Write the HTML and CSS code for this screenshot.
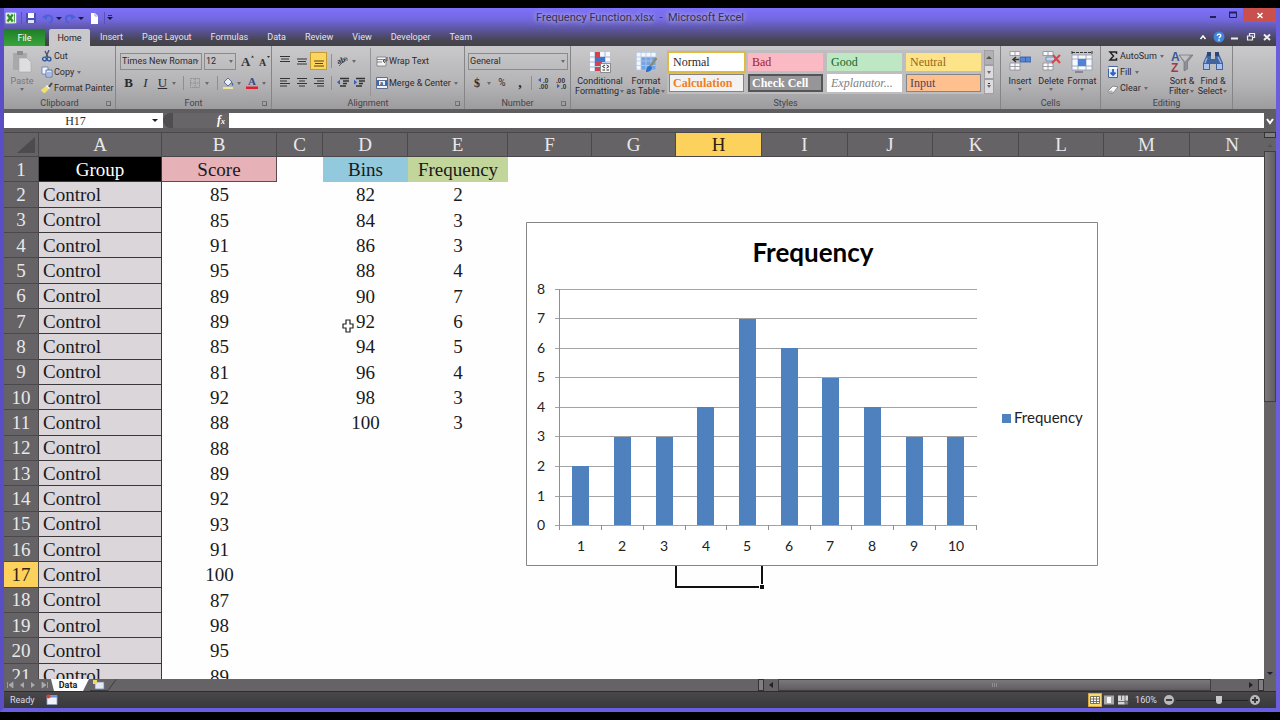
FILE: index.html
```html
<!DOCTYPE html>
<html lang="en">
<head>
<meta charset="utf-8">
<title>Frequency Function.xlsx - Microsoft Excel</title>
<link rel="stylesheet" href="styles.css">
</head>
<body>
<div class="window">
  <header class="chrome">
    <div class="titlebar">
      <div class="quick">
        <svg class="i16" viewBox="0 0 16 16"><path d="M2 2h12v12H2z" fill="#f4fbf2"/><path d="M2 2h9v12H2z" fill="#d9efd2"/><path d="M4 4l6 8M10 4l-6 8" stroke="#2c8a2c" stroke-width="2.4"/><path d="M12 3v10" stroke="#3f9a3f"/></svg>
        <span class="qsep first"></span>
        <button class="q w17" aria-label="Save"><svg class="i12" viewBox="0 0 12 12"><path d="M1 1h10v10H1z" fill="#4a50b4"/><path d="M3 1h6v5H3z" fill="#fff"/><path d="M3 8h6v3H3z" fill="#dfe3f5"/></svg></button>
        <button class="q w17" aria-label="Undo"><svg class="i12" viewBox="0 0 12 12"><path d="M3 6c2-4 7-3 7 1s-2 3-3 4" fill="none" stroke="#4a62d8" stroke-width="2"/><path d="M0 5l5-3v6z" fill="#4a62d8"/></svg></button>
        <span class="caret dark w6"></span>
        <button class="q w16" aria-label="Redo"><svg class="i12" viewBox="0 0 12 12"><path d="M9 6C7 2 2 3 2 7s2 3 3 4" fill="none" stroke="#4a62d8" stroke-width="2"/><path d="M12 5L7 2v6z" fill="#4a62d8"/></svg></button>
        <span class="caret dark w6"></span>
        <button class="q w20" aria-label="New"><svg class="i12" viewBox="0 0 12 12"><path d="M3 1h4l3 3v8H3z" fill="#fff"/><path d="M7 1v3h3" fill="none" stroke="#9aa" /></svg></button>
        <span class="qsep"></span>
        <span class="caret dark bar w10"></span>
      </div>
      <h1 class="title">Frequency Function.xlsx&nbsp; - &nbsp;Microsoft Excel</h1>
      <div class="winbtns">
        <button class="wb" aria-label="Minimize"><svg class="i12" viewBox="0 0 12 12"><path d="M3 8h6" stroke="#222058" stroke-width="2"/></svg></button>
        <button class="wb" aria-label="Maximize"><svg class="i12" viewBox="0 0 12 12"><path d="M2.500 3.500h7v5h-7z" fill="none" stroke="#222058"/><path d="M2 3.500h8" stroke="#222058" stroke-width="2"/></svg></button>
        <button class="wb close" aria-label="Close"><svg class="i12" viewBox="0 0 12 12"><path d="M3.500 4l5 5M8.500 4l-5 5" stroke="#fff" stroke-width="1.500"/></svg></button>
      </div>
    </div>
    <nav class="tabs">
      <button class="file">File</button>
      <button class="tab on">Home</button>
      <button class="tab">Insert</button>
      <button class="tab">Page Layout</button>
      <button class="tab">Formulas</button>
      <button class="tab">Data</button>
      <button class="tab">Review</button>
      <button class="tab">View</button>
      <button class="tab">Developer</button>
      <button class="tab">Team</button>
      <div class="docbtns">
        <svg class="i12" viewBox="0 0 12 12"><path d="M3.500 8L6 5l2.500 3" fill="none" stroke="#fff" stroke-width="1.500"/></svg>
        <svg class="i12" viewBox="0 0 12 12"><circle cx="6" cy="6" r="5.500" fill="#3f86dc"/><path d="M4.300 4.800c0-2.300 3.500-2.200 3.500-.2 0 1.300-1.700 1.300-1.700 2.700M6 8.300v1.400" fill="none" stroke="#fff" stroke-width="1.400"/></svg>
        <svg class="i12" viewBox="0 0 12 12"><path d="M2 7.500h7" stroke="#eee" stroke-width="2"/></svg>
        <svg class="i12" viewBox="0 0 12 12"><path d="M4.500 4.500v-2h5v4h-2M2.500 5h5v4h-5z" fill="none" stroke="#eee" stroke-width="1.200"/></svg>
        <svg class="i12" viewBox="0 0 12 12"><path d="M3 3.500l6 5.500M9 3.500L3 9" stroke="#eee" stroke-width="2"/></svg>
      </div>
    </nav>
  </header>

  <section class="ribbon">
    <div class="group g-clip">
      <div class="body">
        <button class="big dim w36"><svg class="bi" viewBox="0 0 22 24"><path d="M2 3h14v17H2z" fill="#a9a8ab"/><path d="M6 1h6v4H6z" fill="#8e8d91"/><path d="M8 8h8l4 4v10H8z" fill="#dedde0" stroke="#a5a4a8" stroke-width=".6"/></svg><span>Paste</span><i class="caret"></i></button>
        <div class="list">
          <button class="row"><svg class="i12" viewBox="0 0 12 12"><path d="M8 0L5 7M4 1l3 6" stroke="#44536e" stroke-width="1.300"/><circle cx="3.500" cy="9" r="1.900" fill="none" stroke="#2d57a8" stroke-width="1.400"/><circle cx="8" cy="9" r="1.900" fill="none" stroke="#2d57a8" stroke-width="1.400"/></svg>Cut</button>
          <button class="row"><svg class="i12" viewBox="0 0 12 12"><path d="M1 1h6v7H1z" fill="#f4f6fb" stroke="#5b78b8" stroke-width=".8"/><path d="M5 4h6v7H5z" fill="#dfe8f8" stroke="#3f62aa" stroke-width=".8"/><path d="M6 7h4M6 9h4" stroke="#3f62aa" stroke-width=".7"/></svg>Copy<i class="caret"></i></button>
          <button class="row"><svg class="i12" viewBox="0 0 12 12"><path d="M0 8l5-4 3 3-4 4c-2 0-3-1-4-3z" fill="#f2df6b"/><path d="M5 4l3 3 1-1-3-3z" fill="#fff"/><path d="M8 5l3-4" stroke="#44484f" stroke-width="2"/></svg>Format Painter</button>
        </div>
      </div>
      <div class="glabel">Clipboard</div><i class="launch"></i>
    </div>

    <div class="group g-font">
      <div class="body two">
        <div class="line gap2">
          <label class="sel w82"><select aria-label="Font"><option>Times New Roman</option></select><i class="caret"></i></label>
          <label class="sel w32"><select aria-label="Font size"><option>12</option></select><i class="caret"></i></label>
          <button class="ib w17 serif" aria-label="Grow font"><svg class="i14" viewBox="0 0 14 14"><path d="M11 3.500l1.500-2L14 3.500z" fill="#333"/><text x="1" y="12" font-size="13" class="sv">A</text></svg></button>
          <button class="ib w14 serif" aria-label="Shrink font"><svg class="i14" viewBox="0 0 14 14"><path d="M10 2h3l-1.500 2z" fill="#333"/><text x="2" y="12" font-size="10" class="sv">A</text></svg></button>
        </div>
        <div class="line">
          <button class="ib w17 serif b">B</button><button class="ib w17 serif it">I</button><button class="ib w17 serif un">U</button><i class="caret w6"></i><i class="sep w12"></i>
          <button class="ib w12" aria-label="Borders"><svg class="i12" viewBox="0 0 12 12"><path d="M1.500 1.500h9v9h-9zM6 1.500v9M1.500 6h9" fill="none" stroke="#8f8e93" stroke-dasharray="1.500 .7"/></svg></button><i class="caret w12"></i><i class="sep w8"></i>
          <button class="ib w14" aria-label="Fill colour"><svg class="i12" viewBox="0 0 12 12"><path d="M2 5l4-4 4 4-4 4z" fill="#e9eef7" stroke="#51648f" stroke-width=".9"/><path d="M9.500 5c2 1 2 3 1.300 4-1-1-1.300-2-1.300-4z" fill="#2f64c0"/><path d="M1 10h10v2H1z" fill="#e8e6a0"/></svg></button><i class="caret w8"></i>
          <button class="ib w18" aria-label="Font colour"><svg class="i12" viewBox="0 0 12 12"><text x="2" y="8" font-size="11" class="sv blue">A</text><path d="M0 9.500h12V12H0z" fill="#e3202a"/></svg></button><i class="caret w6"></i>
        </div>
      </div>
      <div class="glabel">Font</div><i class="launch"></i>
    </div>

    <div class="group g-align">
      <div class="body">
        <div class="two alignl">
          <div class="line">
            <button class="ib w17" aria-label="Top align"><svg class="i12" viewBox="0 0 12 12"><path d="M1 1.500h10M2 4h8M1 6.500h10" stroke="#333"/></svg></button>
            <button class="ib w17" aria-label="Middle align"><svg class="i12" viewBox="0 0 12 12"><path d="M1 4h10M2 6.500h8M1 9h10" stroke="#333"/></svg></button>
            <button class="ib w17 lit" aria-label="Bottom align"><svg class="i12" viewBox="0 0 12 12"><path d="M1 6h10M2 8.500h8M1 11h10" stroke="#5a4310"/></svg></button>
            <i class="sep w8"></i>
            <button class="ib w16" aria-label="Orientation"><svg class="i12" viewBox="0 0 12 12"><path d="M2 11l8-8M10 3v3M10 3H7" stroke="#666" fill="none"/><text x="0" y="8" font-size="8" transform="rotate(-20 4 6)" class="sv">ab</text></svg></button><i class="caret w6"></i>
          </div>
          <div class="line">
            <button class="ib w17" aria-label="Align left"><svg class="i12" viewBox="0 0 12 12"><path d="M1 1.500h10M1 4h7M1 6.500h10M1 9h7" stroke="#333" stroke-width="1.200"/></svg></button>
            <button class="ib w17" aria-label="Centre"><svg class="i12" viewBox="0 0 12 12"><path d="M1 1.500h10M3 4h6M1 6.500h10M3 9h6" stroke="#333" stroke-width="1.200"/></svg></button>
            <button class="ib w17" aria-label="Align right"><svg class="i12" viewBox="0 0 12 12"><path d="M1 1.500h10M4 4h7M1 6.500h10M4 9h7" stroke="#333" stroke-width="1.200"/></svg></button>
            <i class="sep w8"></i>
            <button class="ib w16" aria-label="Decrease indent"><svg class="i12" viewBox="0 0 12 12"><path d="M3 1.500h9M6 4h6M6 6.500h4M3 9h6" stroke="#333" stroke-width="1.500"/><path d="M0 5.200l3-2.500v5z" fill="#3d5bb5"/></svg></button>
            <button class="ib w16" aria-label="Increase indent"><svg class="i12" viewBox="0 0 12 12"><path d="M3 1.500h9M6 4h6M6 6.500h4M3 9h6" stroke="#333" stroke-width="1.500"/><path d="M4 5.200L1 2.700v5z" fill="#3d5bb5"/></svg></button>
          </div>
        </div>
        <div class="two alignr">
          <button class="row"><svg class="i12" viewBox="0 0 12 12"><path d="M1 2h9v9H1z" fill="#f3f3f5" stroke="#77767b" stroke-width=".8"/><path d="M1 4.500h9M1 7h5" stroke="#77767b" stroke-width=".9"/><path d="M11 2v4H7M9 4L7 6l2 2" fill="none" stroke="#555"/></svg>Wrap Text</button>
          <button class="row"><svg class="i12" viewBox="0 0 12 12"><path d="M.5.5h11v11H.5z" fill="#eef2fb" stroke="#5c6d93"/><path d="M0 3.500h12M0 8.500h12" stroke="#5c6d93" /><path d="M1 4h2v4H1zM9 4h2v4H9z" fill="#3c66bd"/><text x="4" y="8.200" font-size="6" class="sv">a</text></svg>Merge &amp; Center<i class="caret"></i></button>
        </div>
      </div>
      <div class="glabel">Alignment</div><i class="launch"></i>
    </div>

    <div class="group g-num">
      <div class="body two">
        <div class="line"><label class="sel w100"><select aria-label="Number format"><option>General</option></select><i class="caret"></i></label></div>
        <div class="line">
          <button class="ib w18 serif b s12">$</button><i class="caret w6"></i><button class="ib w20 s10">%</button><button class="ib w16 serif b s14">,</button><i class="sep w6"></i>
          <button class="ib w20" aria-label="Increase decimal"><svg class="i12" viewBox="0 0 12 12"><text x="5" y="5.500" font-size="6.500" class="ss">.0</text><text x="1" y="11.500" font-size="6.500" class="ss">.00</text><path d="M0 3l3-2.200v4.400z" fill="#3d5bb5"/></svg></button>
          <button class="ib w14" aria-label="Decrease decimal"><svg class="i12" viewBox="0 0 12 12"><text x="1" y="5.500" font-size="6.500" class="ss">.00</text><text x="6" y="11.500" font-size="6.500" class="ss">.0</text><path d="M5 9L2 6.800v4.400z" fill="#3d5bb5"/></svg></button>
        </div>
      </div>
      <div class="glabel">Number</div><i class="launch"></i>
    </div>

    <div class="group g-styles">
      <div class="body">
        <button class="big w50"><svg class="bi" viewBox="0 0 22 24"><path d="M1 2h20v19H1z" fill="#f6f8fc"/><path d="M1 7h20M1 12h20M1 17h20M6 2v19M16 2v19" stroke="#9fb3d6"/><path d="M6 2h5v5H6zM6 12h7v4H6zM6 17h5v4H6z" fill="#d6404a"/><path d="M6 7h10v5H6z" fill="#4076c9"/><path d="M11.500 13.500h10v9h-10z" fill="#f7f7fa" stroke="#777" stroke-width=".8"/><path d="M16 15l-2.500 1.500L16 18M13.500 20H16M17.500 15l2.500 1.500-2.500 1.500M17.500 20H20" stroke="#333" fill="none"/></svg><span>Conditional<br>Formatting<i class="caret w6"></i></span></button>
        <button class="big w42"><svg class="bi" viewBox="0 0 22 24"><path d="M1 2h20v18H1z" fill="#f4f7fd"/><path d="M6 7h15v13H6z" fill="#74a3e6"/><path d="M1 2.500h20M1 7h20M1 11h20M1 15.500h20M1 20h20M1.500 2v18M6 2v18M11 2v18M16 2v18M21 2v18" stroke="#b7c6e0" stroke-width=".8"/><path d="M21.500 8l-6 8" stroke="#8c8b70" stroke-width="2.400"/><path d="M11 22c0-4 2-6 4-6.500l2 2c0 3-3 4.500-6 4.500z" fill="#2f6fc6"/></svg><span>Format<br>as Table<i class="caret w6"></i></span></button>
        <div class="gallery">
          <div class="cells">
            <button class="st normal">Normal</button><button class="st bad">Bad</button><button class="st good">Good</button><button class="st neutral">Neutral</button>
            <button class="st calc">Calculation</button><button class="st check">Check Cell</button><button class="st expl">Explanator...</button><button class="st input">Input</button>
          </div>
          <div class="gscroll"><button aria-label="Up" class="dimb"><i class="caret up"></i></button><button aria-label="Down"><i class="caret"></i></button><button aria-label="More"><i class="caret bar"></i></button></div>
        </div>
      </div>
      <div class="glabel">Styles</div>
    </div>

    <div class="group g-cells">
      <div class="body">
        <button class="big w30"><svg class="bi" viewBox="0 0 22 24"><path d="M1 1.500h10v4H1zM1 13h10v7H1z" fill="#f7f8fb" stroke="#8a8c94" stroke-width=".8"/><path d="M6 1.500v4M6 13v7M1 16.500h10" stroke="#8a8c94" stroke-width=".8"/><path d="M11 7h11v5H11z" fill="#5585d6" stroke="#34599d" stroke-width=".8"/><path d="M16.500 7v5" stroke="#34599d" stroke-width=".8"/><path d="M4 9.500h6M7 7L4 9.500 7 12" stroke="#333" stroke-width="1.400" fill="none"/></svg><span>Insert</span><i class="caret"></i></button>
        <button class="big w32"><svg class="bi" viewBox="0 0 22 24"><path d="M3 1.500h10v4H3zM3 13h10v7H3z" fill="#f7f8fb" stroke="#8a8c94" stroke-width=".8"/><path d="M8 1.500v4M8 13v7M3 16.500h10" stroke="#8a8c94" stroke-width=".8"/><path d="M6 7h9v4H6z" fill="#c3d2ee" stroke="#6b80ab" stroke-width=".8"/><path d="M13 5l7 8M20 5l-8 8" stroke="#dc4343" stroke-width="2"/></svg><span>Delete</span><i class="caret"></i></button>
        <button class="big w30"><svg class="bi" viewBox="0 0 22 24"><path d="M1 5h20v15H1z" fill="#f7f9fd" stroke="#8d99b3" stroke-width=".8"/><path d="M1 9h20M1 16h20M7 5v15M15 5v15" stroke="#8d99b3" stroke-width=".8"/><path d="M7 9h8v7H7z" fill="#4d82d8"/><path d="M1 1v3M21 1v3M1 2.500h20" stroke="#333" stroke-dasharray="3 1"/><path d="M4 22h8" stroke="#555"/></svg><span>Format</span><i class="caret"></i></button>
      </div>
      <div class="glabel">Cells</div>
    </div>

    <div class="group g-edit">
      <div class="body">
        <div class="list">
          <button class="row"><svg class="i12" viewBox="0 0 12 12"><path d="M9.500 4V2H3l3.500 4L3 10h6.500V8" fill="none" stroke="#222" stroke-width="1.500"/></svg>AutoSum<i class="caret"></i></button>
          <button class="row"><svg class="i12" viewBox="0 0 12 12"><path d="M1.500.5h9v11h-9z" fill="#dfe9fb" stroke="#49639b"/><path d="M1.500 1h9v2h-9z" fill="#fff"/><path d="M6 3v6M3.500 6.500L6 9l2.500-2.500" fill="none" stroke="#2d62c4" stroke-width="1.800"/></svg>Fill<i class="caret"></i></button>
          <button class="row"><svg class="i12" viewBox="0 0 12 12"><path d="M1 9l5-5 5 1-5 6H2z" fill="#f6f6f9" stroke="#77767d" stroke-width=".8"/><path d="M1 9l4-.5L6 11H2z" fill="#aeb0ba"/></svg>Clear<i class="caret"></i></button>
        </div>
        <button class="big w32"><svg class="bi" viewBox="0 0 22 24"><text x="0" y="11" font-size="12" class="sa">A</text><text x="0" y="22" font-size="12" class="sz">Z</text><path d="M8 5h14l-5.500 7v7l-3.500 2v-9z" fill="#8f9095" stroke="#6c6d72" stroke-width=".6"/><path d="M9 5.500h10l-5 6z" fill="#c3c4c8"/></svg><span>Sort &amp;<br>Filter<i class="caret w6"></i></span></button>
        <button class="big w30"><svg class="bi" viewBox="0 0 22 24"><path d="M5 4h4v5h4V4h4l4 9v7h-7v-6H8v6H1v-7z" fill="#41639f"/><path d="M5 2h4v4H5zM13 2h4v4h-4z" fill="#2d4678"/><path d="M2 14h5v5H2zM15 14h5v5h-5z" fill="#a9c3ec"/><path d="M5 8l-2 5M16 7l3 6" stroke="#8fb0e4" stroke-width="1.500"/></svg><span>Find &amp;<br>Select<i class="caret w6"></i></span></button>
      </div>
      <div class="glabel">Editing</div>
    </div>
  </section>

  <section class="fbar">
    <label class="namebox"><input aria-label="Name box" value="H17"><i class="caret black"></i></label>
    <div class="fx"><i class="knob"></i><em>f<small>x</small></em></div>
    <input class="formula" aria-label="Formula bar">
    <button class="expand" aria-label="Expand formula bar"><svg class="i12" viewBox="0 0 12 12"><path d="M3 4l3 4 3-4" fill="none" stroke="#fff" stroke-width="2"/></svg></button>
  </section>

  <main class="main">
    <div class="sheet">
      <table class="grid">
        <colgroup><col class="c0"><col class="cA"><col class="cB"><col class="cC"><col class="cD"><col class="cE"><col class="cF"><col class="cF"><col class="cX"><col class="cX"><col class="cY"><col class="cX"><col class="cY"><col class="cX"><col class="cY"></colgroup>
        <thead><tr><th class="corner"><svg class="tri" viewBox="0 0 18 16"><path d="M18 0v16H0z" fill="#4d4b4e"/></svg></th><th>A</th><th>B</th><th>C</th><th>D</th><th>E</th><th>F</th><th>G</th><th class="hot">H</th><th>I</th><th>J</th><th>K</th><th>L</th><th>M</th><th>N</th></tr></thead>
        <tbody>
          <tr class="heads"><th>1</th><td>Group</td><td>Score</td><td></td><td>Bins</td><td>Frequency</td></tr>
          <tr><th>2</th><td>Control</td><td>85</td><td></td><td>82</td><td>2</td></tr>
          <tr><th>3</th><td>Control</td><td>85</td><td></td><td>84</td><td>3</td></tr>
          <tr><th>4</th><td>Control</td><td>91</td><td></td><td>86</td><td>3</td></tr>
          <tr><th>5</th><td>Control</td><td>95</td><td></td><td>88</td><td>4</td></tr>
          <tr><th>6</th><td>Control</td><td>89</td><td></td><td>90</td><td>7</td></tr>
          <tr><th>7</th><td>Control</td><td>89</td><td></td><td>92</td><td>6</td></tr>
          <tr><th>8</th><td>Control</td><td>85</td><td></td><td>94</td><td>5</td></tr>
          <tr><th>9</th><td>Control</td><td>81</td><td></td><td>96</td><td>4</td></tr>
          <tr><th>10</th><td>Control</td><td>92</td><td></td><td>98</td><td>3</td></tr>
          <tr><th>11</th><td>Control</td><td>88</td><td></td><td>100</td><td>3</td></tr>
          <tr><th>12</th><td>Control</td><td>88</td></tr>
          <tr><th>13</th><td>Control</td><td>89</td></tr>
          <tr><th>14</th><td>Control</td><td>92</td></tr>
          <tr><th>15</th><td>Control</td><td>93</td></tr>
          <tr><th>16</th><td>Control</td><td>91</td></tr>
          <tr><th class="hot">17</th><td>Control</td><td>100</td></tr>
          <tr><th>18</th><td>Control</td><td>87</td></tr>
          <tr><th>19</th><td>Control</td><td>98</td></tr>
          <tr><th>20</th><td>Control</td><td>95</td></tr>
          <tr><th>21</th><td>Control</td><td>89</td></tr>
        </tbody>
      </table>
      <div class="selection"><i class="handle"></i></div>
      <svg class="chart" viewBox="526 222 572 344" role="img" aria-label="Frequency chart">
        <path d="M526.500 222.500h571v343h-571z" fill="#fff" stroke="#858487"/>
        <text x="813" y="262" class="ctitle">Frequency</text>
        <path d="M555 289.500h422M555 318.500h422M555 348.500h422M555 377.500h422M555 407.500h422M555 436.500h422M555 466.500h422M555 496.500h422M555 525.500h422" stroke="#a3a2a5" fill="none"/>
        <g fill="#4e81bd"><path d="M572 466h17v59h-17zM614 437h17v88h-17zM656 437h17v88h-17zM697 407h17v118h-17zM739 319h17v206h-17zM781 348h17v177h-17zM822 378h17v147h-17zM864 407h17v118h-17zM906 437h17v88h-17zM947 437h17v88h-17zM1002 414h9v9h-9z"/></g>
        <path d="M559.500 289v241M601.500 525v5M643.500 525v5M685.500 525v5M726.500 525v5M768.500 525v5M810.500 525v5M851.500 525v5M893.500 525v5M935.500 525v5M976.500 525v5" stroke="#8f8e91" fill="none"/>
        <g class="clab"><text x="541" y="294">8</text><text x="541" y="323">7</text><text x="541" y="353">6</text><text x="541" y="382">5</text><text x="541" y="412">4</text><text x="541" y="441">3</text><text x="541" y="471">2</text><text x="541" y="501">1</text><text x="541" y="530">0</text>
        <text x="581" y="551">1</text><text x="622" y="551">2</text><text x="664" y="551">3</text><text x="706" y="551">4</text><text x="747" y="551">5</text><text x="789" y="551">6</text><text x="830" y="551">7</text><text x="872" y="551">8</text><text x="914" y="551">9</text><text x="956" y="551">10</text></g>
        <text x="1014" y="423" class="cleg">Frequency</text>
      </svg>
      <svg class="cursor" viewBox="0 0 12 14"><path d="M4 1h4v4h3v4H8v4H4V9H1V5h3z" fill="#fff" stroke="#222" stroke-width="1.200"/></svg>
    </div>
    <div class="vscroll">
      <i class="vsplit"></i><i class="caret up black vh"></i><i class="vthumb"></i><i class="caret black vh"></i>
    </div>
  </main>

  <footer>
    <div class="sheetbar">
      <div class="nav">
        <svg class="i8" viewBox="0 0 8 8"><path d="M1.500 1v6M7 1v6L3 4z" stroke="#aaa9ac" fill="#aaa9ac" stroke-width=".8"/></svg>
        <svg class="i8" viewBox="0 0 8 8"><path d="M6 1v6L2 4z" fill="#aaa9ac"/></svg>
        <svg class="i8" viewBox="0 0 8 8"><path d="M2 1v6l4-3z" fill="#aaa9ac"/></svg>
        <svg class="i8" viewBox="0 0 8 8"><path d="M6.500 1v6M1 1v6l4-3z" stroke="#aaa9ac" fill="#aaa9ac" stroke-width=".8"/></svg>
      </div>
      <button class="stab">Data</button>
      <svg class="newtab" viewBox="0 0 34 12"><path d="M1 11.500h18L27 .5" fill="none" stroke="#3e3d40"/><path d="M6 3h9v7H6z" fill="#e4e8f5" stroke="#6d7ca5" stroke-width=".7"/><path d="M4 1h4v4H4z" fill="#f0d76a"/></svg>
      <span class="grow"></span>
      <i class="hsplit"></i><i class="hbtn"><svg class="i8" viewBox="0 0 8 8"><path d="M6 1v6L2 4z" fill="#222"/></svg></i>
      <div class="htrack"><i class="hthumb"><svg class="i8" viewBox="0 0 8 8"><path d="M1.500 2v4M3.500 2v4M5.500 2v4" stroke="#8e8c90"/></svg></i></div>
      <i class="hbtn"><svg class="i8" viewBox="0 0 8 8"><path d="M2 1v6l4-3z" fill="#222"/></svg></i><i class="hsplit"></i><span class="hend"></span>
    </div>
    <div class="status">
      <span class="ready">Ready</span>
      <svg class="i12" viewBox="0 0 12 12"><path d="M1 1.500h10v9H1z" fill="#f1f4fa" stroke="#8da0c6" stroke-width=".8"/><path d="M4 1.500h7v2H4z" fill="#6f8fce"/><circle cx="2.500" cy="2.500" r="2" fill="#d8433c"/></svg>
      <span class="grow"></span>
      <button class="view on" aria-label="Normal view"><svg class="i12" viewBox="0 0 12 12"><path d="M1.500 2.500h9v7h-9zM1.500 5h9M1.500 7.500h9M4.500 2.500v7M7.500 2.500v7" fill="#fff" stroke="#6b6650" stroke-width=".9"/></svg></button>
      <button class="view" aria-label="Page layout view"><svg class="i12" viewBox="0 0 12 12"><path d="M1 1.500h10v9H1z" fill="#a9a9ac"/><path d="M4 3h4v6H4z" fill="#f4f4f4"/></svg></button>
      <button class="view" aria-label="Page break view"><svg class="i12" viewBox="0 0 12 12"><path d="M1 1.500h10v9H1z" fill="#d5d5d8"/><path d="M4.500 1v5M8 1v6M1 7.500h7M8 7h3v3.500H8z" stroke="#555" fill="#888" stroke-width=".8"/></svg></button>
      <span class="pct">160%</span>
      <button class="zb" aria-label="Zoom out"><svg class="i12" viewBox="0 0 12 12"><circle cx="6" cy="6" r="5" fill="#b9b8bb"/><path d="M3 6h6" stroke="#333" stroke-width="1.800"/></svg></button>
      <input class="zoom" type="range" min="0" max="100" value="60" aria-label="Zoom">
      <button class="zb" aria-label="Zoom in"><svg class="i12" viewBox="0 0 12 12"><circle cx="6" cy="6" r="5" fill="#b9b8bb"/><path d="M3 6h6M6 3v6" stroke="#333" stroke-width="1.800"/></svg></button>
    </div>
  </footer>
</div>
</body>
</html>
```

FILE: styles.css
```css
* { box-sizing: border-box; }
html, body { height: 100%; }
body {
  margin: 0;
  padding: 8px 0;
  background: #000;
  overflow: hidden;
  font: 9px/10px Roboto, "Open Sans", sans-serif;
  color: #2b2a2d;
}
button, input, select {
  margin: 0; padding: 0; border: 0; border-radius: 0;
  background: none; font: inherit; color: inherit; outline: none;
}
button { display: flex; align-items: center; justify-content: center; white-space: nowrap; }
svg { display: block; flex: none; }
.i8 { width: 8px; height: 8px; }
.i12 { width: 12px; height: 12px; }
.i14 { width: 14px; height: 14px; }
.i16 { width: 14px; height: 14px; }
.w6 { width: 6px; } .w8 { width: 8px; } .w10 { width: 10px; } .w12 { width: 12px; }
.w14 { width: 14px; } .w16 { width: 16px; } .w17 { width: 17px; } .w18 { width: 18px; }
.w20 { width: 20px; } .w30 { width: 30px; } .w32 { width: 32px; } .w36 { width: 36px; }
.w42 { width: 42px; } .w50 { width: 50px; } .w82 { width: 82px; } .w100 { width: 100px; }
.grow { flex: 1; }

.window {
  height: 100%;
  display: flex;
  flex-direction: column;
  border: solid #6a5de0;
  border-width: 0 4px 4px;
  border-left-color: #5a4ec4;
  background: #5b595c;
}

/* title bar and tabs */
.chrome { background: linear-gradient(#7d71fa 0, #7368e0 30%, #5a549c 58%, #474552 85%, #434147); }
.titlebar { height: 20px; display: grid; grid-template-columns: 1fr auto 1fr; align-items: center; }
.quick { display: flex; align-items: center; }
.q { height: 16px; }
.qsep { width: 1px; height: 12px; background: #5a50b8; }
.qsep.first { margin-left: 3px; }
.title {
  margin: 0; font-size: 11px; line-height: 16px; font-weight: 400; color: #35324a;
  padding: 0 4px; white-space: nowrap;
  text-shadow: 0 0 4px #b5b0ea, 0 0 6px #b5b0ea;
}
.winbtns { display: flex; justify-content: flex-end; align-self: start; }
.wb { width: 20px; height: 14px; }
.close { width: 33px; background: #c9504c; }
.tabs { height: 18px; display: flex; align-items: stretch; gap: 1px; color: #e4e2ec; }
.file { width: 41px; margin: 1px 3px 0 0; background: linear-gradient(#1f7d27, #3aa53c); color: #fff; }
.tab { padding: 0 9px; }
.tab.on { width: 41px; padding: 0; background: #c9c8cb; color: #222; margin-top: 1px; border-radius: 2px 2px 0 0; }
.docbtns { margin-left: auto; display: flex; align-items: center; gap: 4px; padding-right: 3px; }

/* ribbon */
.ribbon { height: 63px; display: flex; background: linear-gradient(#c9c8cb, #b4b3b6 60%, #9c9b9e); }
.group {
  position: relative; display: flex; flex-direction: column; padding-top: 2px;
  border-right: 1px solid #858487; flex: none;
}
.g-clip { width: 112px; } .g-font { width: 156px; } .g-align { width: 193px; } .g-num { width: 106px; }
.g-styles { width: 430px; } .g-cells { width: 100px; } .g-edit { width: 132px; }
.body { height: 48px; display: flex; }
.g-font .body, .g-align .alignl { padding-left: 4px; }
.g-num .body { padding-left: 3px; }
.g-styles .body, .g-cells .body { padding-left: 4px; }
.two { display: flex; flex-direction: column; padding-top: 2px; }
.line, .two > .row { height: 22px; display: flex; align-items: center; }
.gap2 { gap: 2px; }
.glabel { height: 13px; line-height: 15px; text-align: center; color: #444347; }
.launch {
  position: absolute; right: 4px; bottom: 3px; width: 5px; height: 5px;
  border: solid #77767a; border-width: 1px 0 0 1px;
}
.launch::after { content: ""; position: absolute; right: 0; bottom: 0; width: 3px; height: 3px; border: solid #66656a; border-width: 0 1px 1px 0; }
.list { display: flex; flex-direction: column; padding-left: 1px; }
.row { height: 16px; justify-content: flex-start; gap: 1px; }
.g-edit .list { padding-left: 6px; width: 65px; }
.alignl { width: 99px; border-right: 1px solid #959498; }
.alignr { padding-left: 5px; }
.big { flex-direction: column; justify-content: flex-start; padding-top: 2px; text-align: center; }
.bi { width: 22px; height: 24px; margin-bottom: 2px; }
.dim { color: #78777b; }
.ib { height: 17px; }
.lit { background: #fbd55e; border: 1px solid #c49a35; height: 18px; }
.serif { font-family: "Liberation Serif", serif; font-size: 13px; }
.b { font-weight: 700; } .it { font-style: italic; } .un { text-decoration: underline; }
.s10 { font-size: 10px; } .s12 { font-size: 12px; } .s14 { font-size: 14px; }
.sv { font-family: "Liberation Serif", serif; font-weight: 700; fill: #333; }
.ss { font-family: "Liberation Sans", sans-serif; font-weight: 700; fill: #333; }
.sa, .sz { font-family: "Liberation Sans", sans-serif; font-weight: 700; fill: #3a5796; }
.sz { fill: #a23a4a; }
.blue { fill: #34497c; }
.sep { height: 14px; background: linear-gradient(#8e8d91, #8e8d91) center / 1px 100% no-repeat; flex: none; }
.caret { display: inline-flex; align-items: center; justify-content: center; flex: none; min-width: 8px; vertical-align: middle; height: 6px; }
.caret.w6 { min-width: 0; }
.caret::after { content: ""; border: solid transparent; border-width: 3px 2px 0; border-top-color: #6b6a6e; }
.caret.dark::after, .caret.black::after { border-width: 3px 3px 0; border-top-color: #1d1b33; }
.caret.up::after { border-width: 0 3px 3px; border-bottom-color: #555; }
.caret.bar::after { box-shadow: 0 -3px 0 -1px #333; }
.sel { display: grid; align-items: center; border: 1px solid #8b8a8e; height: 17px; }
.sel select, .sel .caret { grid-area: 1 / 1; }
.sel select { appearance: none; width: 100%; height: 15px; padding-left: 1px; }
.sel .caret { justify-self: end; pointer-events: none; }
.gallery { display: flex; gap: 3px; height: 44px; margin-top: 2px; padding-left: 2px; background: #bebdc0; }
.cells { display: grid; grid-template-columns: repeat(4, 75px); grid-auto-rows: 18px; gap: 3px 4px; padding-top: 3px; }
.st { justify-content: flex-start; padding-left: 4px; font: 12px/14px "Liberation Serif", serif; }
.normal { background: #fff; border: 1px solid #fff; padding-left: 3px; outline: 2px solid #e0b93f; outline-offset: 0; }
.bad { background: #fbb9c4; color: #a5202c; }
.good { background: #bde8c3; color: #14652a; }
.neutral { background: #fde488; color: #96661c; }
.calc { background: #f2f2f2; border: 1px solid #858487; padding-left: 3px; color: #ee7f22; font-weight: 700; }
.check { background: #969598; border: 2px solid #555457; color: #fff; font-weight: 700; padding-left: 2px; }
.expl { background: #fff; color: #808083; font-style: italic; }
.input { background: #fdc08e; border: 1px solid #858487; padding-left: 3px; color: #54425c; }
.gscroll { width: 10px; display: flex; flex-direction: column; }
.gscroll button { flex: 1; background: #dcdbde; border: 1px solid #a09fa3; }
.gscroll .dimb { background: #b1b0b3; }

/* formula bar */
.fbar { height: 23px; padding: 4px 0; display: flex; background: #5f5d60; }
.namebox { width: 159px; display: flex; align-items: center; background: #fff; }
.namebox input { flex: 1; min-width: 0; text-align: center; font: 12px/14px "Liberation Serif", serif; }
.namebox .caret { width: 16px; }
.fx { width: 66px; display: flex; align-items: center; justify-content: space-between; padding-right: 4px; color: #fff; font: 700 12px/14px "Liberation Serif", serif; background: #676568; }
.fx small { font-size: 8px; }
.knob { width: 10px; height: 15px; border-radius: 8px 0 0 8px; background: #4f4d50; }
.formula { flex: 1; min-width: 0; background: #fff; }
.expand { width: 12px; }

/* worksheet */
.main { flex: 1; min-height: 0; display: flex; }
.sheet { position: relative; flex: 1; min-width: 0; overflow: hidden; background: #fefefe; }
.grid {
  table-layout: fixed; width: 1271px; height: 557px; border-collapse: separate; border-spacing: 0;
  font: 19px/22px "Liberation Serif", serif; color: #1a191b;
}
.c0 { width: 35px; } .cA { width: 123px; } .cB { width: 115px; } .cC { width: 46px; }
.cD { width: 85px; } .cE { width: 100px; } .cF { width: 84px; } .cX { width: 86px; } .cY { width: 85px; }
.grid th, .grid td { padding: 1px 0 0; text-align: center; font-weight: 400; }
.grid th { background: #656366; color: #e9e8ea; border: solid #4a484b; border-width: 0 1px 1px 0; }
.grid thead tr { height: 25px; }
.grid thead th { border-top: 1px solid #4a484b; }
.grid .corner { vertical-align: bottom; }
.tri { width: 18px; height: 16px; margin: 0 3px 3px auto; }
.grid .hot { background: #fdd25c; color: #2b2410; }
.grid td:nth-child(2) { background: #dbd6da; border: solid #3a383b; border-width: 0 1px 1px 0; text-align: left; padding-left: 4px; }
.grid .heads td:nth-child(2) { background: #000; color: #fff; text-align: center; padding-left: 0; }
.heads td:nth-child(3) { background: #e6b1b7; border: solid #5d4a4e; border-width: 0 1px 1px 0; }
.heads td:nth-child(5) { background: #92c9dd; }
.heads td:nth-child(6) { background: #c2d59a; }
.selection { position: absolute; left: 671px; top: 430px; width: 88px; height: 26px; border: 2px solid #111; }
.handle { position: absolute; right: -3px; bottom: -3px; width: 5px; height: 5px; background: #111; border: solid #fff; border-width: 1px 0 0 1px; }
.chart { position: absolute; left: 522px; top: 90px; width: 572px; height: 344px; font-family: Lato, sans-serif; fill: #222; }
.ctitle { font-size: 26px; font-weight: 700; text-anchor: middle; fill: #000; }
.clab { font-size: 14px; text-anchor: middle; }
.cleg { font-size: 15px; }
.cursor { position: absolute; left: 338px; top: 187px; width: 12px; height: 14px; }
.vscroll { width: 12px; background: #656366; display: flex; flex-direction: column; }
.vsplit { height: 6px; border: 1px solid #333; background: #807e81; margin-bottom: 2px; }
.vh { height: 11px; }
.vthumb { height: 251px; background: linear-gradient(90deg, #7c7a7d, #605e61); border: 1px solid #403e41; margin-bottom: auto; }

/* sheet tabs and status bar */
.sheetbar { height: 12px; display: flex; align-items: stretch; background: #656366; }
.nav { width: 47px; padding: 0 2px; display: flex; align-items: center; justify-content: space-between; }
.stab { width: 38px; background: #fff; font-weight: 700; padding-right: 4px; color: #222; clip-path: polygon(0 0, 100% 0, 32px 100%, 3px 100%); }
.newtab { width: 34px; height: 12px; }
.hsplit { width: 6px; border: 1px solid #333; background: #807e81; }
.hbtn { width: 14px; display: flex; align-items: center; justify-content: center; }
.htrack { width: 466px; display: flex; }
.hthumb { width: 433px; display: flex; align-items: center; justify-content: center; background: linear-gradient(#7a787b, #5f5d60); border: 1px solid #403e41; }
.hend { width: 12px; }
.status { height: 17px; display: flex; align-items: center; padding: 0 14px 0 6px; background: linear-gradient(#49474a, #37393c); color: #dddce0; border-top: 1px solid #2e2d30; }
.ready { width: 36px; }
.view { width: 14px; height: 14px; }
.view.on { background: #f8d877; border: 1px solid #d7a83c; }
.pct { width: 32px; text-align: center; }
.zb { width: 14px; }
.zoom { appearance: none; width: 72px; height: 12px; background: linear-gradient(#222, #222) center / 100% 1px no-repeat; }
.zoom::-webkit-slider-thumb { appearance: none; width: 6px; height: 8px; background: #c9c8cb; border-radius: 0 0 3px 3px; }
```
